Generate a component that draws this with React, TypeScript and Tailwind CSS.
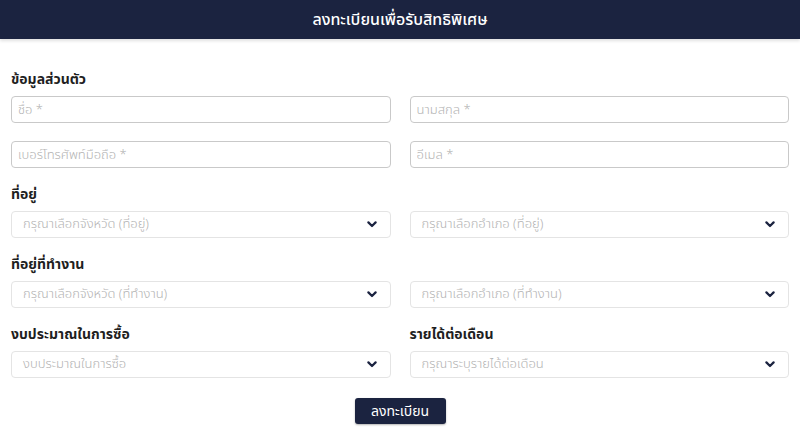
import React from "react";

const font = { fontFamily: '"Noto Sans Thai", "Noto Sans", sans-serif' };

function Chevron() {
  return (
    <svg className="w-[10px] h-[7px] text-[#1b2340]" viewBox="0 0 10 7" fill="none" stroke="currentColor" strokeWidth={2.2} strokeLinecap="round" strokeLinejoin="round">
      <path d="M1.4 1.4l3.6 3.6 3.6-3.6" />
    </svg>
  );
}

function TextField({ placeholder }: { placeholder: string }) {
  return (
    <input
      placeholder={placeholder}
      className="h-[27px] w-full rounded-[4px] border border-[#c9c9c9] px-[6px] text-[13px] font-light text-gray-700 placeholder:text-[#b3b3b3] outline-none"
    />
  );
}

function SelectBox({ placeholder }: { placeholder: string }) {
  return (
    <div className="h-[27px] w-full rounded-[4px] border border-[#e4e4e4] pl-[11px] pr-[13px] flex items-center justify-between cursor-pointer">
      <span className="text-[13px] font-light text-[#b3b3b3]">{placeholder}</span>
      <Chevron />
    </div>
  );
}

function Label({ children }: { children?: React.ReactNode }) {
  return <div className="h-5 leading-5 text-[14px] font-bold text-[#1f1f1f] mb-[6px]">{children}</div>;
}

export default function App() {
  return (
    <div className="w-[800px] h-[437px] bg-white overflow-hidden" style={font}>
      <div className="h-[39px] bg-[#1b2340] flex items-center justify-center shadow-[0_2px_3px_rgba(0,0,0,0.12)]">
        <h1 className="text-white text-[16px] font-medium">ลงทะเบียนเพื่อรับสิทธิพิเศษ</h1>
      </div>

      <div className="px-[11px] pt-[31px]">
        <Label>ข้อมูลส่วนตัว</Label>
        <div className="grid grid-cols-2 gap-x-[19px] gap-y-[18px]">
          <TextField placeholder="ชื่อ *" />
          <TextField placeholder="นามสกุล *" />
          <TextField placeholder="เบอร์โทรศัพท์มือถือ *" />
          <TextField placeholder="อีเมล *" />
        </div>

        <div className="mt-[17px]">
          <Label>ที่อยู่</Label>
          <div className="grid grid-cols-2 gap-x-[19px]">
            <SelectBox placeholder="กรุณาเลือกจังหวัด (ที่อยู่)" />
            <SelectBox placeholder="กรุณาเลือกอำเภอ (ที่อยู่)" />
          </div>
        </div>

        <div className="mt-[17px]">
          <Label>ที่อยู่ที่ทำงาน</Label>
          <div className="grid grid-cols-2 gap-x-[19px]">
            <SelectBox placeholder="กรุณาเลือกจังหวัด (ที่ทำงาน)" />
            <SelectBox placeholder="กรุณาเลือกอำเภอ (ที่ทำงาน)" />
          </div>
        </div>

        <div className="mt-[17px] grid grid-cols-2 gap-x-[19px]">
          <div>
            <Label>งบประมาณในการซื้อ</Label>
            <SelectBox placeholder="งบประมาณในการซื้อ" />
          </div>
          <div>
            <Label>รายได้ต่อเดือน</Label>
            <SelectBox placeholder="กรุณาระบุรายได้ต่อเดือน" />
          </div>
        </div>

        <div className="mt-[20px] flex justify-center">
          <button className="w-[91px] h-[26px] rounded-[3px] bg-[#1b2340] text-white text-[14px] shadow-[0_1px_2px_rgba(0,0,0,0.3)]">
            ลงทะเบียน
          </button>
        </div>
      </div>
    </div>
  );
}
